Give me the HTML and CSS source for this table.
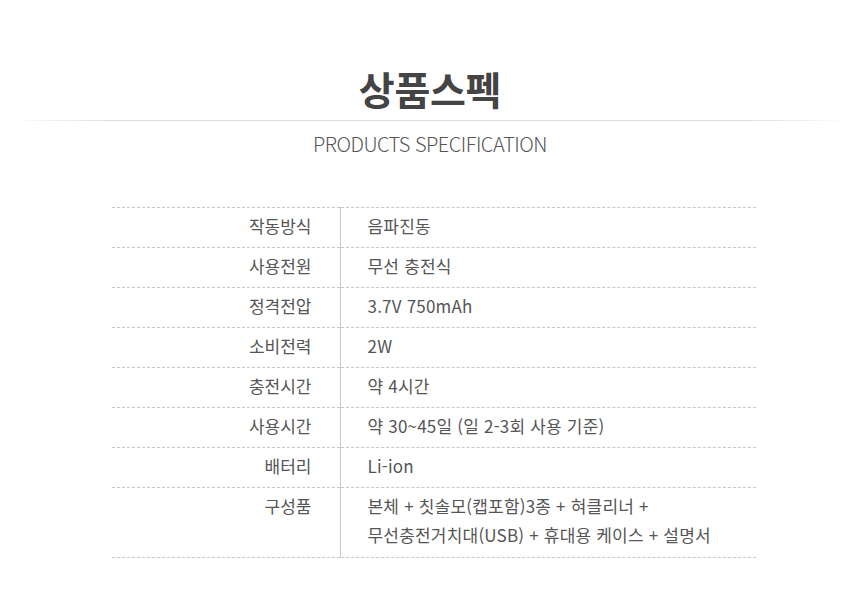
FILE: index.html
```html
<!DOCTYPE html>
<html lang="ko">
<head>
<meta charset="utf-8">
<title>상품스펙</title>
<link rel="stylesheet" href="styles.css">
</head>
<body>
<section class="spec">
  <header class="spec-head">
    <h1 class="spec-title">상품스펙</h1>
    <div class="spec-rule"></div>
    <p class="spec-sub">PRODUCTS SPECIFICATION</p>
  </header>
  <table class="spec-table">
    <tbody>
      <tr><th>작동방식</th><td>음파진동</td></tr>
      <tr><th>사용전원</th><td>무선 충전식</td></tr>
      <tr><th>정격전압</th><td>3.7V 750mAh</td></tr>
      <tr><th>소비전력</th><td>2W</td></tr>
      <tr><th>충전시간</th><td>약 4시간</td></tr>
      <tr><th>사용시간</th><td>약 30~45일 (일 2-3회 사용 기준)</td></tr>
      <tr><th>배터리</th><td>Li-ion</td></tr>
      <tr class="multi"><th>구성품</th><td>본체 + 칫솔모(캡포함)3종 + 혀클리너 +<br>무선충전거치대(USB) + 휴대용 케이스 + 설명서</td></tr>
    </tbody>
  </table>
</section>
</body>
</html>
```
FILE: styles.css
```css
html, body {
  margin: 0;
  padding: 0;
  background: #fff;
}
body {
  font-family: "Noto Sans CJK KR", "Noto Sans", sans-serif;
  color: #555;
}
.spec {
  padding-top: 60px;
}
.spec-head {
  display: flex;
  flex-direction: column;
  align-items: center;
}
.spec-title {
  margin: 0;
  font-size: 39px;
  font-weight: 700;
  line-height: 56px;
  letter-spacing: -0.3px;
  color: #444;
}
.spec-rule {
  align-self: stretch;
  margin: 4px 10px 0;
  height: 1px;
  background: linear-gradient(to right, rgba(221,221,221,0) 0%, #ddd 12%, #ddd 88%, rgba(221,221,221,0) 100%);
}
.spec-sub {
  margin: 8px 0 0;
  font-size: 20px;
  font-weight: 300;
  line-height: 30px;
  letter-spacing: -0.5px;
  color: #555;
}
.spec-table {
  margin: 48px 0 0 112px;
  width: 644px;
  border-collapse: collapse;
  font-size: 17px;
}
.spec-table tr {
  border-top: 1px dashed #c8c8c8;
  border-bottom: 1px dashed #c8c8c8;
}
.spec-table th,
.spec-table td {
  padding: 3px 0 7px;
  line-height: 29px;
  font-weight: 400;
  vertical-align: top;
}
.spec-table th {
  width: 228px;
  padding-right: 28px;
  text-align: right;
  box-sizing: border-box;
  border-right: 1px solid #c8c8c8;
  color: #555;
}
.spec-table td {
  padding-left: 27px;
  text-align: left;
  color: #555;
  letter-spacing: 0.2px;
}
.spec-table tr.multi th,
.spec-table tr.multi td {
  padding-top: 3px;
  padding-bottom: 8px;
}
```
